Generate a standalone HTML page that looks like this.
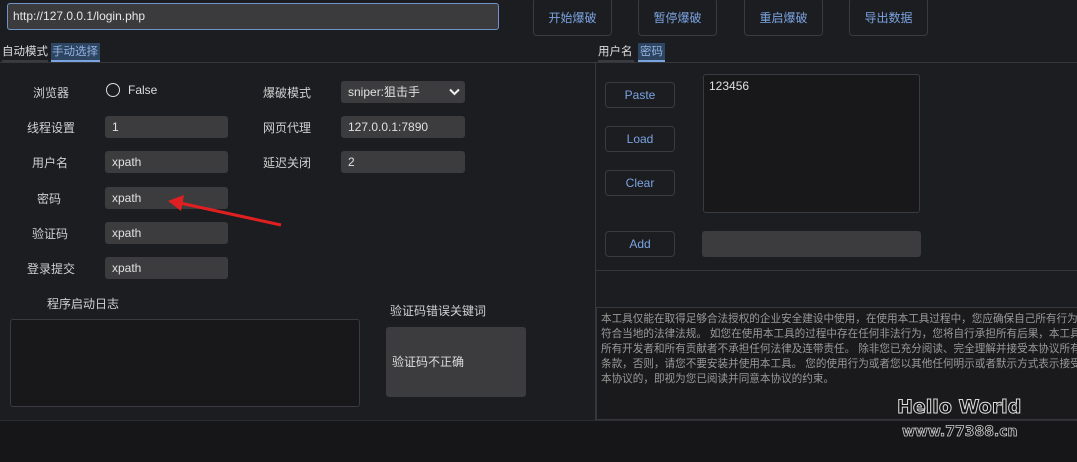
<!DOCTYPE html>
<html><head><meta charset="utf-8"><style>
*{box-sizing:border-box;margin:0;padding:0}
body{width:1077px;height:462px;background:#1c1d21;font-family:"Liberation Sans","Noto Sans CJK SC",sans-serif;font-size:12px;color:#cfcfcf;position:relative;overflow:hidden}
.a{position:absolute;white-space:nowrap}
.inp{position:absolute;background:#3c3c3f;border-radius:3px;color:#e0e0e0;padding-left:7px;line-height:22px;height:22px;font-size:12px}
.btn{position:absolute;border:1px solid #3a3b40;border-radius:4px;color:#7aa3e0;text-align:center;font-size:12px}
.lbl{position:absolute;font-size:12px;color:#d0d0d0;white-space:nowrap}
</style></head><body>
<div class="a" style="left:7px;top:3px;width:492px;height:27px;background:#3b3b3e;border:1px solid #6f93c8;border-radius:3px;color:#e6e6e6;padding-left:5px;line-height:25px;font-size:12px">http://127.0.0.1/login.php</div>
<div class="btn" style="left:533px;top:-2px;width:79px;height:38px;line-height:38px">开始爆破</div>
<div class="btn" style="left:638px;top:-2px;width:79px;height:38px;line-height:38px">暂停爆破</div>
<div class="btn" style="left:744px;top:-2px;width:79px;height:38px;line-height:38px">重启爆破</div>
<div class="btn" style="left:849px;top:-2px;width:79px;height:38px;line-height:38px">导出数据</div>

<div class="a" style="left:2px;top:44px;width:46px;height:18px;color:#ddd;line-height:17px;border-bottom:2px solid #3a3b40;font-size:11.5px">自动模式</div>
<div class="a" style="left:51px;top:43px;width:49px;height:19px;background:#2d4560;color:#8fb1e0;line-height:18px;padding-left:1px;border-bottom:2px solid #7aa3e0;font-size:11.5px">手动选择</div>
<div class="a" style="left:598px;top:44px;width:36px;height:18px;color:#ddd;line-height:17px;border-bottom:2px solid #3a3b40;font-size:11.5px">用户名</div>
<div class="a" style="left:638px;top:43px;width:27px;height:19px;background:#2d4560;color:#8fb1e0;line-height:18px;padding-left:2px;border-bottom:2px solid #7aa3e0;font-size:11.5px">密码</div>

<div class="a" style="left:0;top:62px;width:1077px;height:1px;background:#36373b"></div>
<div class="a" style="left:595px;top:62px;width:1px;height:358px;background:#36373b"></div>
<div class="a" style="left:596px;top:270px;width:481px;height:1px;background:#36373b"></div>
<div class="a" style="left:0;top:420px;width:1077px;height:42px;background:#161618;border-top:1px solid #2c2d30"></div>

<div class="lbl" style="left:33px;top:84px">浏览器</div>
<div class="a" style="left:106px;top:83px;width:14px;height:14px;border:1.5px solid #ddd;border-radius:50%"></div>
<div class="lbl" style="left:128px;top:83px;color:#ddd">False</div>
<div class="lbl" style="left:27px;top:119px">线程设置</div><div class="inp" style="left:105px;top:116px;width:123px">1</div>
<div class="lbl" style="left:32px;top:154px">用户名</div><div class="inp" style="left:105px;top:151px;width:123px">xpath</div>
<div class="lbl" style="left:37px;top:190px">密码</div><div class="inp" style="left:105px;top:187px;width:123px">xpath</div>
<div class="lbl" style="left:32px;top:225px">验证码</div><div class="inp" style="left:105px;top:222px;width:123px">xpath</div>
<div class="lbl" style="left:27px;top:260px">登录提交</div><div class="inp" style="left:105px;top:257px;width:123px">xpath</div>

<div class="lbl" style="left:263px;top:84px">爆破模式</div>
<div class="inp" style="left:341px;top:81px;width:124px">sniper:狙击手<svg class="a" style="left:108px;top:7px" width="11" height="8" viewBox="0 0 11 8"><path d="M1 1.5L5.5 6L10 1.5" stroke="#eee" stroke-width="2" fill="none"/></svg></div>
<div class="lbl" style="left:263px;top:119px">网页代理</div><div class="inp" style="left:341px;top:116px;width:124px">127.0.0.1:7890</div>
<div class="lbl" style="left:263px;top:154px">延迟关闭</div><div class="inp" style="left:341px;top:151px;width:124px">2</div>

<svg class="a" style="left:0;top:0" width="600" height="300"><line x1="281" y1="225" x2="180" y2="203" stroke="#e02020" stroke-width="3"/><path d="M168 201L184 195L181 211Z" fill="#e02020"/></svg>

<div class="lbl" style="left:47px;top:295px">程序启动日志</div>
<div class="a" style="left:10px;top:319px;width:350px;height:88px;background:#18181a;border:1px solid #3a3b40;border-radius:3px"></div>
<div class="lbl" style="left:390px;top:302px">验证码错误关键词</div>
<div class="a" style="left:386px;top:327px;width:140px;height:70px;background:#3c3c3f;border-radius:3px;padding-left:6px;line-height:70px;color:#ddd">验证码不正确</div>

<div class="btn" style="left:605px;top:82px;width:70px;height:26px;line-height:24px">Paste</div>
<div class="btn" style="left:605px;top:126px;width:70px;height:26px;line-height:24px">Load</div>
<div class="btn" style="left:605px;top:170px;width:70px;height:26px;line-height:24px">Clear</div>
<div class="btn" style="left:605px;top:231px;width:70px;height:26px;line-height:24px">Add</div>
<div class="a" style="left:703px;top:74px;width:217px;height:139px;background:#18181a;border:1px solid #3a3b40;border-radius:3px;padding:4px 5px;color:#e0e0e0">123456</div>
<div class="a" style="left:702px;top:231px;width:219px;height:26px;background:#3c3c3f;border-radius:3px"></div>

<div class="a" style="left:596px;top:307px;width:481px;height:113px;border:1px solid #36373b;border-right:none;background:#1a1a1d;padding:4px 0 0 4px;font-size:10.6px;line-height:15px;color:#9a9a9a;overflow:hidden">本工具仅能在取得足够合法授权的企业安全建设中使用，在使用本工具过程中，您应确保自己所有行为<br>符合当地的法律法规。 如您在使用本工具的过程中存在任何非法行为，您将自行承担所有后果，本工具<br>所有开发者和所有贡献者不承担任何法律及连带责任。 除非您已充分阅读、完全理解并接受本协议所有<br>条款，否则，请您不要安装并使用本工具。 您的使用行为或者您以其他任何明示或者默示方式表示接受<br>本协议的，即视为您已阅读并同意本协议的约束。</div>

<div class="a" style="left:897px;top:396px;font-family:'DejaVu Sans',sans-serif;font-weight:bold;font-size:19px;color:#111;-webkit-text-stroke:1px #ddd;letter-spacing:0px">Hello World</div>
<div class="a" style="left:902px;top:424px;font-family:'DejaVu Sans',sans-serif;font-weight:bold;font-size:14px;color:#111;-webkit-text-stroke:0.8px #ccc">www.77388.cn</div>
</body></html>
